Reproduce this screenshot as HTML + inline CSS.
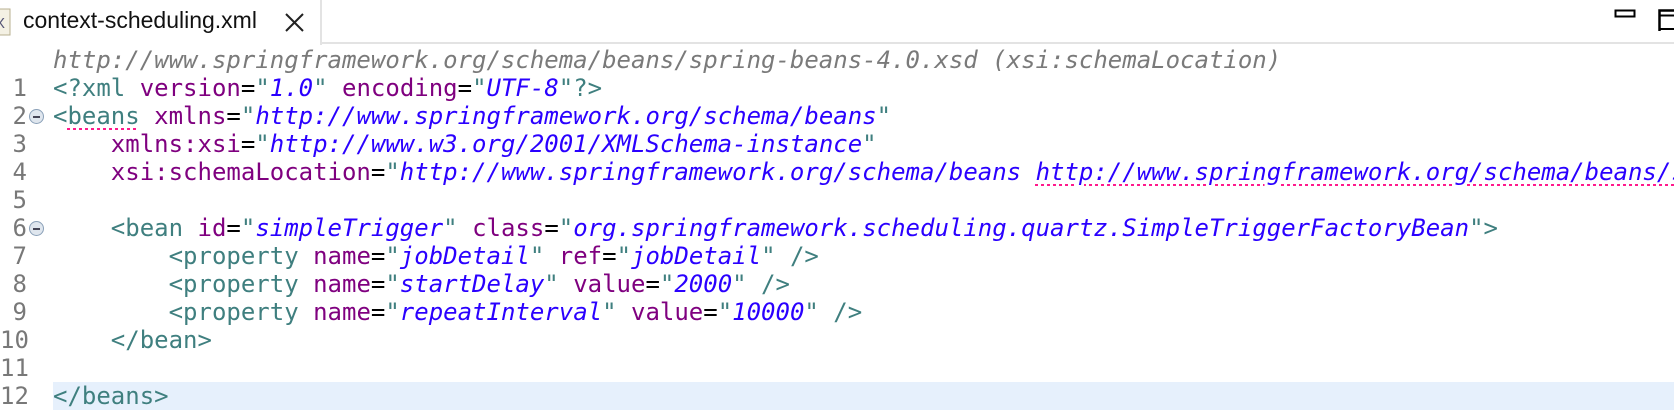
<!DOCTYPE html>
<html><head><meta charset="utf-8"><style>
html,body{margin:0;padding:0;background:#fff;width:1674px;height:417px;overflow:hidden;position:relative}
.tabbar{position:absolute;left:0;top:0;width:1674px;height:44px;border-bottom:2px solid #e3e3e3;box-sizing:border-box}
.tab{position:absolute;left:-2px;top:0;width:324px;height:45px;background:#fff;border-right:2px solid #e3e3e3;box-sizing:border-box}
.tabtxt{position:absolute;left:25px;top:7px;font:23px "Liberation Sans",sans-serif;color:#111}
.x{position:absolute;left:287px;top:13px}
.code{position:absolute;left:0;top:44px;right:0;bottom:0;font-family:"DejaVu Sans Mono","Liberation Mono",monospace;font-size:24px}
.ln{position:absolute;left:0;width:27px;text-align:right;color:#787878;height:28px;line-height:28px}
.row{position:absolute;left:53px;right:0;height:28px;line-height:28px;white-space:pre;overflow:hidden}
.t{color:#3f7f7f}.a{color:#7f007f}.v{color:#2a00ff;font-style:italic}.k{color:#000}
.hl{background:#e6f0fc}
.sq{text-decoration:underline dotted #ff1a8c;text-decoration-thickness:3px;text-underline-offset:4px}
.fold{position:absolute;left:29px;width:15px;height:15px;border-radius:50%;border:1px solid #8aa0b8;background:#dfe6ee;box-sizing:border-box}
.fold:after{content:"";position:absolute;left:3px;top:6px;width:7px;height:1.5px;background:#445}
</style></head><body>
<div class="tabbar"></div>
<div class="tab">
<svg style="position:absolute;left:0;top:8px" width="14" height="28"><rect x="-4" y="1" width="16" height="26" fill="#f4f1e4" stroke="#b8b090"/><text x="-3" y="20" font-size="15" fill="#557" font-family="Liberation Sans">X</text></svg>
<div class="tabtxt">context-scheduling.xml</div>
<svg class="x" width="19" height="19"><path d="M1 1L18 18M18 1L1 18" stroke="#222" stroke-width="2"/></svg>
</div>
<svg style="position:absolute;left:1614px;top:9px" width="24" height="10"><rect x="1.5" y="1.5" width="19" height="6" fill="none" stroke="#000" stroke-width="2"/></svg>
<svg style="position:absolute;left:1658px;top:9px" width="20" height="22"><path d="M20 1.5H1.5V28" fill="none" stroke="#000" stroke-width="2.5"/><path d="M1.5 6.5H20M1.5 20H20" fill="none" stroke="#000" stroke-width="2"/></svg>
<div class="code">
<div class="row" style="top:2px;color:#7a7a7a;font-style:italic">http://www.springframework.org/schema/beans/spring-beans-4.0.xsd (xsi:schemaLocation)</div>

<div class="ln" style="top:30px">1</div>
<div class="row" style="top:30px"><span class="t">&lt;?xml </span><span class="a">version</span><span class="k">=</span><span class="t">"</span><span class="v">1.0</span><span class="t">"</span> <span class="a">encoding</span><span class="k">=</span><span class="t">"</span><span class="v">UTF-8</span><span class="t">"?&gt;</span></div>

<div class="ln" style="top:58px">2</div><div class="fold" style="top:65px"></div>
<div class="row" style="top:58px"><span class="t">&lt;<span class="sq">beans</span></span> <span class="a">xmlns</span><span class="k">=</span><span class="t">"</span><span class="v">http://www.springframework.org/schema/beans</span><span class="t">"</span></div>

<div class="ln" style="top:86px">3</div>
<div class="row" style="top:86px">    <span class="a">xmlns:xsi</span><span class="k">=</span><span class="t">"</span><span class="v">http://www.w3.org/2001/XMLSchema-instance</span><span class="t">"</span></div>

<div class="ln" style="top:114px">4</div>
<div class="row" style="top:114px">    <span class="a">xsi:schemaLocation</span><span class="k">=</span><span class="t">"</span><span class="v">http://www.springframework.org/schema/beans <span class="sq">http://www.springframework.org/schema/beans/spring-beans-4.0.xsd</span></span><span class="t">"&gt;</span></div>

<div class="ln" style="top:142px">5</div>

<div class="ln" style="top:170px">6</div><div class="fold" style="top:177px"></div>
<div class="row" style="top:170px">    <span class="t">&lt;bean</span> <span class="a">id</span><span class="k">=</span><span class="t">"</span><span class="v">simpleTrigger</span><span class="t">"</span> <span class="a">class</span><span class="k">=</span><span class="t">"</span><span class="v">org.springframework.scheduling.quartz.SimpleTriggerFactoryBean</span><span class="t">"&gt;</span></div>

<div class="ln" style="top:198px">7</div>
<div class="row" style="top:198px">        <span class="t">&lt;property</span> <span class="a">name</span><span class="k">=</span><span class="t">"</span><span class="v">jobDetail</span><span class="t">"</span> <span class="a">ref</span><span class="k">=</span><span class="t">"</span><span class="v">jobDetail</span><span class="t">" /&gt;</span></div>

<div class="ln" style="top:226px">8</div>
<div class="row" style="top:226px">        <span class="t">&lt;property</span> <span class="a">name</span><span class="k">=</span><span class="t">"</span><span class="v">startDelay</span><span class="t">"</span> <span class="a">value</span><span class="k">=</span><span class="t">"</span><span class="v">2000</span><span class="t">" /&gt;</span></div>

<div class="ln" style="top:254px">9</div>
<div class="row" style="top:254px">        <span class="t">&lt;property</span> <span class="a">name</span><span class="k">=</span><span class="t">"</span><span class="v">repeatInterval</span><span class="t">"</span> <span class="a">value</span><span class="k">=</span><span class="t">"</span><span class="v">10000</span><span class="t">" /&gt;</span></div>

<div class="ln" style="top:282px">10</div>
<div class="row" style="top:282px">    <span class="t">&lt;/bean&gt;</span></div>

<div class="ln" style="top:310px">11</div>

<div class="ln" style="top:338px">12</div>
<div class="row hl" style="top:338px"><span class="t">&lt;/beans&gt;</span></div>
</div>
</body></html>
